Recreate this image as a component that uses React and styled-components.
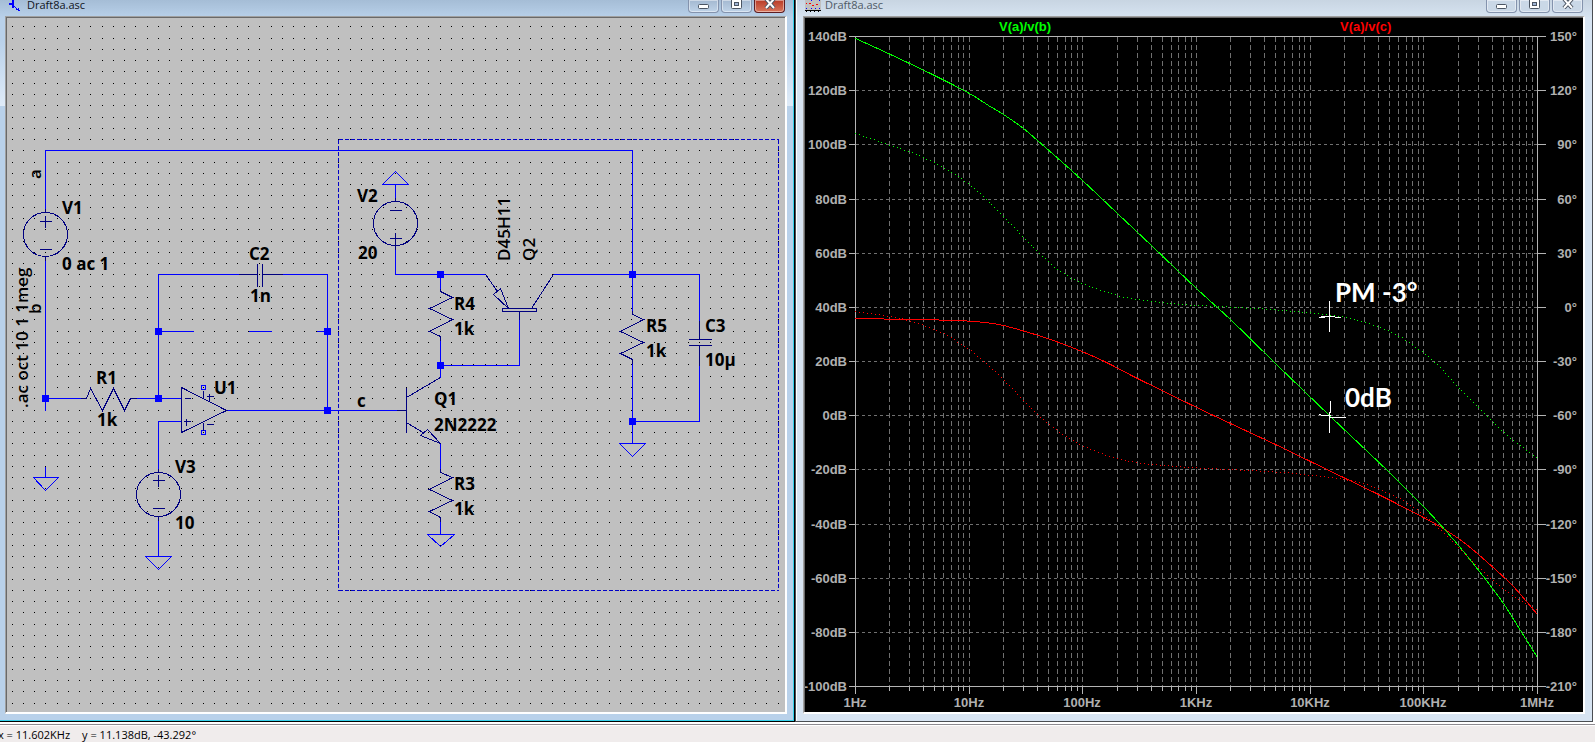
import React from 'react';
import styled, { createGlobalStyle, css } from 'styled-components';

const GlobalStyle = createGlobalStyle`
  * {
    box-sizing: border-box;
  }

  body {
    margin: 0;
    background: #fff;
    font-family: 'Open Sans', 'Noto Sans', sans-serif;
  }
`;

const Page = styled.div`
  display: flex;
  flex-direction: column;
  height: 100vh;
  min-height: 480px;
  overflow: hidden;
`;

const Workspace = styled.main`
  display: grid;
  grid-template-columns: minmax(0, 795fr) minmax(0, 798fr);
  grid-template-rows: minmax(0, 1fr);
  flex: 1;
  min-height: 0;
  padding-right: 2px;
`;

const activeFrame = css`
  padding: 0 7px 7px 5px;
  border: solid #000;
  border-width: 0 1px 1px 0;
  box-shadow: inset -1px -1px 0 #35d0ea;
  background: linear-gradient(#a5bdd6 0, #b9d1ea 18px, #b9d1ea 40px, #dfebf8 106px, #b9d1ea 106px);
`;

const inactiveFrame = css`
  padding: 0 7px 7px 7px;
  border: solid #4a4d52;
  border-width: 0 1px 1px 1px;
  box-shadow: inset 1px 0 0 #fff;
  background: linear-gradient(#c8d5e2 0, #d7e4f2 18px);
`;

const WindowFrame = styled.section`
  display: flex;
  flex-direction: column;
  min-width: 0;
  ${({ $active }) => ($active ? activeFrame : inactiveFrame)}
`;

const TitleBar = styled.header`
  display: flex;
  align-items: flex-start;
  height: 16px;
  padding-left: ${({ $active }) => ($active ? '4px' : '2px')};
  padding-right: 2px;
`;

const TitleIcon = styled.svg`
  display: block;
  width: 16px;
  height: 13px;
  flex: none;
`;

const Title = styled.h1`
  flex: 1;
  margin: 0 0 0 ${({ $active }) => ($active ? '2px' : '4px')};
  font-size: 11px;
  font-weight: 400;
  line-height: 10px;
  color: ${({ $active }) => ($active ? '#10151c' : '#4f5a66')};
`;

const TitleButtons = styled.div`
  display: flex;
  gap: 2px;
`;

const TitleButton = styled.button`
  display: flex;
  align-items: center;
  justify-content: center;
  width: 31px;
  height: 13px;
  padding: 0 0 3px;
  border: 1px solid #8493ad;
  border-top: 0;
  border-radius: 0 0 4px 4px;
  background: ${({ $active }) => ($active ? 'linear-gradient(#a3b8d0, #bfd3e8)' : '#cad8e7')};
  box-shadow: inset 0 0 0 1px rgba(255, 255, 255, 0.45);

  ${({ $danger }) =>
    $danger &&
    css`
      border-color: #5c1d22;
      background: linear-gradient(#b83a26, #d9765c);
    `}

  svg {
    display: block;
    flex: none;
  }
`;

const Client = styled.div`
  display: flex;
  flex: 1;
  min-height: 0;
  overflow: hidden;
  padding: 1px 0 0 1px;
  border: solid;
  border-width: 1px 2px 2px 1px;
  border-color: #a0a0a0 #fff #fff #a0a0a0;
  box-shadow: inset 1px 1px 0 #696969;
  background: ${({ $dark }) => ($dark ? '#000' : '#c0c0c0')};
`;

const Drawing = styled.svg`
  display: block;
  flex: 1;
  min-width: 0;
  width: 100%;
  height: 100%;
`;

const Wires = styled.g`
  fill: none;
  stroke: #0000ff;
  shape-rendering: crispEdges;
`;

const Symbols = styled.g`
  fill: none;
  stroke: #000080;
  shape-rendering: crispEdges;
`;

const PartText = styled.text`
  font: ${({ $vertical }) => ($vertical ? 600 : 700)} 17px 'Open Sans', 'Noto Sans', sans-serif;
  fill: #000;
`;

const AxisText = styled.text`
  font: bold 13px 'Liberation Sans', Arial, sans-serif;
  fill: ${({ $color }) => $color || '#b0b0b0'};
`;

const NoteText = styled.text`
  font: bold 26px Lato, sans-serif;
  fill: #fff;
`;

const StatusBar = styled.footer`
  display: flex;
  gap: 14px;
  height: 21px;
  border-top: 2px solid #fff;
  border-bottom: 1px solid #fff;
  box-shadow: inset 0 1px 0 #8d8a90, inset 0 2px 0 #fff;
  background: #f0ecec;
  font-size: 11px;
  line-height: 22px;
  white-space: pre;
  text-indent: -2px;
`;

const GRID_STEP_X = 11.267;
const GRID_STEP_Y = 11.269;

const buildDots = () => {
  let d = '';
  for (let row = 0; row < 80; row += 1) {
    for (let col = 0; col < 120; col += 1) {
      d += `M${Math.floor(12 + col * GRID_STEP_X)} ${Math.floor(26.9 + row * GRID_STEP_Y)}h1v1h-1z`;
    }
  }
  return d;
};

const dots = buildDots();

const wires = [
  'M45 208V150H632V274',
  'M45 260V410',
  'M45 398H80M136 398H181',
  'M158 398V274H238M282 274H327V410',
  'M158 331H193M248 331H271M316 331H327',
  'M226 410H396',
  'M181 421H158V468M158 520V556',
  'M395 184V197M395 249V274H485',
  'M440 274V288M440 340V377',
  'M440 365H519V319',
  'M553 274H699V320M699 365V421H632',
  'M632 274V310M632 363V443',
  'M440 443V468M440 521V534',
  'M45 466V477',
  // grounds
  'M33 477H58L45 490Z',
  'M145 556H171L158 569Z',
  'M619 443H645L632 456Z',
  'M427 534H454L440 546Z',
  'M382 184H408L395 171Z',
];

const symbols = [
  // R1
  'M80 398H86L90 388L102 410L113 388L124 410L130 398H136',
  // R4, R3, R5
  'M440 288V291L452 297L429 308L452 319L429 331L440 336V340',
  'M440 468V472L452 477L429 489L452 500L429 511L440 517V521',
  'M632 310V314L643 319L620 331L643 342L620 353L632 359V363',
  // C2, C3
  'M238 274H257M257 263V286M262 263V286M262 274H282',
  'M699 320V339M688 339H711M688 345H711M699 345V365',
  // U1
  'M181 387V432L226 410Z',
  'M184 398H190M183 421H190M186 418V425M203 390V398M203 422V430',
  'M206 396H213M209 393V400M206 424H213',
  // Q1
  'M396 410H406M406 387V432M406 397L440 377M406 422L424 433M440 443L427 429L420 435Z',
  // Q2
  'M485 274L497 291M508 308L500 288L493 294ZM531 308L553 274M502 308H536V311H502ZM519 311V319',
];

const sources = [
  { x: 45, y: 234, plus: 221, minus: 249 },
  { x: 158, y: 494, plus: 480, minus: 508 },
  { x: 395, y: 223, plus: 238, minus: 210 },
];

const nodes = [
  [45, 398],
  [158, 398],
  [158, 331],
  [327, 331],
  [327, 410],
  [440, 274],
  [440, 365],
  [632, 274],
  [632, 421],
];

const partLabels = [
  [62, 214, 'V1'],
  [62, 270, '0 ac 1'],
  [249, 260, 'C2'],
  [250, 302, '1n'],
  [96, 384, 'R1'],
  [97, 426, '1k'],
  [214, 394, 'U1'],
  [175, 473, 'V3'],
  [175, 529, '10'],
  [357, 202, 'V2'],
  [358, 259, '20'],
  [454, 310, 'R4'],
  [454, 335, '1k'],
  [357, 407, 'c'],
  [434, 405, 'Q1'],
  [434, 431, '2N2222'],
  [454, 490, 'R3'],
  [454, 515, '1k'],
  [646, 332, 'R5'],
  [646, 357, '1k'],
  [705, 332, 'C3'],
  [705, 366, '10µ'],
];

const verticalLabels = [
  [41, 179, 'a'],
  [41, 314, 'b'],
  [28, 408, '.ac oct 10 1 1meg'],
  [510, 261, 'D45H11'],
  [535, 261, 'Q2'],
];

const Schematic = () => (
  <Drawing viewBox="7 18 778 694" preserveAspectRatio="xMinYMin meet" overflow="visible">
    <path d={dots} fill="#000" shapeRendering="crispEdges" />
    <g transform="translate(0.5 0.5)">
      <path
        d="M338 139H778M338 139V590M778 139V590M338 590H778"
        fill="none"
        stroke="#0000c8"
        strokeDasharray="4 2"
        shapeRendering="crispEdges"
      />
      <Wires>
        {wires.map((d) => (
          <path key={d} d={d} />
        ))}
        <path d="M201 385h4v4h-4zM201 430h4v4h-4z" />
      </Wires>
      <Symbols>
        {symbols.map((d) => (
          <path key={d} d={d} />
        ))}
        {sources.map(({ x, y, plus, minus }) => (
          <g key={`${x}-${y}`}>
            <circle cx={x} cy={y} r="22" />
            <path d={`M${x} ${y - 26}v4M${x} ${y + 22}v4`} />
            <path d={`M${x - 6} ${plus}h12M${x} ${plus - 6}v12M${x - 6} ${minus}h12`} />
          </g>
        ))}
      </Symbols>
    </g>
    {nodes.map(([x, y]) => (
      <rect key={`${x}-${y}`} x={x - 3} y={y - 3} width="7" height="7" fill="#0000ff" />
    ))}
    {partLabels.map(([x, y, label]) => (
      <PartText key={`${x}-${y}`} x={x} y={y}>
        {label}
      </PartText>
    ))}
    {verticalLabels.map(([x, y, label]) => (
      <PartText key={label} $vertical transform={`translate(${x} ${y}) rotate(-90)`}>
        {label}
      </PartText>
    ))}
  </Drawing>
);

const PLOT = { left: 855, right: 1537, top: 36, bottom: 686 };
const DECADE = (PLOT.right - PLOT.left) / 6;
const ROW = (PLOT.bottom - PLOT.top) / 12;

const rows = Array.from({ length: 13 }, (_, i) => ({
  y: Math.round(PLOT.top + i * ROW),
  db: `${140 - i * 20}dB`,
  phase: `${150 - i * 30}°`,
}));

const freqLabels = ['1Hz', '10Hz', '100Hz', '1KHz', '10KHz', '100KHz', '1MHz'];

const columns = [];
for (let dec = 0; dec < 6; dec += 1) {
  for (let n = 1; n < 10; n += 1) {
    columns.push({
      x: Math.round(PLOT.left + (dec + Math.log10(n)) * DECADE),
      major: n === 1,
    });
  }
}
columns.push({ x: PLOT.right, major: true });

const gainTraces = [
  {
    color: '#ff0000',
    points: [
      [855, 318], [910, 319], [957, 320], [985, 322], [1003, 325], [1028, 332], [1053, 340], [1079, 350],
      [1104, 361], [1137, 378], [1190, 404], [1230, 423], [1275, 444], [1310, 461], [1345, 478],
      [1380, 495], [1423, 517], [1446, 530], [1466, 544], [1486, 561], [1510, 583], [1526, 601], [1537, 614],
    ],
  },
  {
    color: '#00ff00',
    points: [
      [855, 38], [890, 54], [934, 75], [969, 93], [988, 105], [1003, 114], [1023, 128], [1037, 140],
      [1053, 154], [1082, 180], [1117, 213], [1152, 246], [1196, 288], [1231, 320], [1275, 363],
      [1330, 416], [1390, 473], [1423, 506], [1446, 531], [1463, 551], [1486, 580], [1503, 603],
      [1520, 630], [1537, 657],
    ],
  },
];

const phaseTraces = [
  {
    color: '#ff0000',
    points: [
      [855, 311], [876, 314], [901, 318], [921, 324], [944, 333], [969, 349], [987, 364], [1003, 379],
      [1020, 397], [1037, 414], [1058, 431], [1081, 445], [1109, 456], [1139, 463], [1190, 467],
      [1230, 469], [1285, 472], [1330, 477], [1356, 481], [1378, 488], [1403, 500], [1423, 514],
      [1446, 535], [1478, 567], [1498, 585], [1518, 599], [1537, 610],
    ],
  },
  {
    color: '#00ff00',
    points: [
      [855, 133], [890, 145], [914, 153], [934, 162], [952, 172], [969, 184], [982, 195], [1003, 216],
      [1023, 237], [1037, 251], [1053, 266], [1071, 278], [1084, 284], [1104, 291], [1124, 297],
      [1150, 301], [1180, 304], [1217, 306], [1256, 308], [1297, 311], [1327, 314], [1345, 317],
      [1365, 322], [1383, 328], [1403, 338], [1423, 352], [1440, 367], [1458, 387], [1478, 407],
      [1496, 425], [1513, 440], [1537, 458],
    ],
  },
];

// Catmull-Rom spline through the sampled points
const smooth = (pts) =>
  pts.slice(1).reduce((d, p, i) => {
    const p0 = pts[i - 1] || pts[i];
    const p1 = pts[i];
    const p3 = pts[i + 2] || p;
    const c1 = [p1[0] + (p[0] - p0[0]) / 6, p1[1] + (p[1] - p0[1]) / 6];
    const c2 = [p[0] - (p3[0] - p1[0]) / 6, p[1] - (p3[1] - p1[1]) / 6];
    return `${d}C${c1} ${c2} ${p}`;
  }, `M${pts[0]}`);

// One whole-pixel dot every few pixels of trace length
const dotted = (pts, step = 4) => {
  let d = '';
  let next = 0;
  let walked = 0;
  pts.slice(1).forEach(([x2, y2], i) => {
    const [x1, y1] = pts[i];
    const length = Math.hypot(x2 - x1, y2 - y1);
    while (next <= walked + length) {
      const t = (next - walked) / length;
      d += `M${Math.round(x1 + (x2 - x1) * t)} ${Math.round(y1 + (y2 - y1) * t)}h1v1h-1z`;
      next += step;
    }
    walked += length;
  });
  return d;
};

const BodePlot = () => (
  <Drawing viewBox="805 18 778 694">
    <g transform="translate(0.5 0.5)" fill="none" shapeRendering="crispEdges">
      <g stroke="#707070">
        {columns.map(({ x }) => (
          <path key={x} d={`M${x} ${PLOT.top}V${PLOT.bottom}`} strokeDasharray="5 3" />
        ))}
        {rows.map(({ y }) => (
          <path key={y} d={`M${PLOT.left} ${y}H${PLOT.right}`} strokeDasharray="3 3" />
        ))}
      </g>
      <g stroke="#b4b4b4">
        <path d={`M${PLOT.left} ${PLOT.top}V${PLOT.bottom}M${PLOT.right} ${PLOT.top}V${PLOT.bottom}`} />
        <path d={`M848 ${PLOT.top}H1545M848 ${PLOT.bottom}H1545`} />
        {rows.map(({ y }) => (
          <path key={y} d={`M848 ${y}H855M1537 ${y}H1545`} />
        ))}
        {columns.map(({ x, major }) => (
          <path key={x} d={`M${x} ${PLOT.bottom}v${major ? 7 : 4}`} />
        ))}
      </g>
      {gainTraces.map(({ color, points }) => (
        <path key={color} d={smooth(points)} stroke={color} />
      ))}
      <path
        stroke="#fff"
        d="M1329 300V331M1318 317H1324M1320 316H1334M1334 317H1340M1330 400V412M1329 411V432M1318 414H1320M1320 415H1330M1329 417H1345"
      />
    </g>
    {phaseTraces.map(({ color, points }) => (
      <path key={color} d={dotted(points)} fill={color} shapeRendering="crispEdges" />
    ))}
    {rows.map(({ y, db, phase }) => (
      <React.Fragment key={y}>
        <AxisText x="847" y={y + 5} textAnchor="end">
          {db}
        </AxisText>
        <AxisText x="1577" y={y + 5} textAnchor="end">
          {phase}
        </AxisText>
      </React.Fragment>
    ))}
    {freqLabels.map((label, i) => (
      <AxisText key={label} x={Math.round(PLOT.left + i * DECADE)} y="707" textAnchor="middle">
        {label}
      </AxisText>
    ))}
    <AxisText $color="#00ff00" x="999" y="31">
      V(a)/v(b)
    </AxisText>
    <AxisText $color="#ff0000" x="1340" y="31">
      V(a)/v(c)
    </AxisText>
    <NoteText x="1335" y="302">
      PM -3°
    </NoteText>
    <NoteText x="1345" y="407">
      0dB
    </NoteText>
  </Drawing>
);

const SchematicIcon = () => (
  <TitleIcon viewBox="0 0 16 13" fill="none" stroke="#0000ff" shapeRendering="crispEdges">
    <path d="M0 3.5H4M4 0V8" strokeWidth="2" />
    <path d="M4 5L10 11" strokeWidth="1" />
    <path d="M6 9H9V7L11 11Z" fill="#0000ff" stroke="none" />
  </TitleIcon>
);

const PlotIcon = () => (
  <TitleIcon viewBox="0 0 16 13" shapeRendering="crispEdges">
    <path fill="#c0c0c0" d="M0 0h16v10H0z" />
    <path fill="#ff0000" d="M1 3h1v1H1zM4 3h2v1H4zM7 5h2v1H7zM11 4h2v1h-2z" />
    <path fill="#0000ff" d="M6 0h1v1H6zM14 0h1v1h-1zM1 8h1v1H1zM6 8h1v1H6zM10 8h1v1h-1zM14 8h1v1h-1z" />
    <path fill="#000" d="M0 10h16v1H0zM1 11h1v1H1zM5 11h1v1H5zM9 11h1v1H9zM13 11h1v1h-1z" />
  </TitleIcon>
);

const MinimizeGlyph = () => (
  <svg width="12" height="9">
    <rect x="0.5" y="4.5" width="10" height="4" rx="1" fill="#fff" stroke="#4b5563" />
  </svg>
);

const MaximizeGlyph = () => (
  <svg width="12" height="9">
    <rect x="0.5" y="-1.5" width="10" height="10" rx="1" fill="#fff" stroke="#4b5563" />
    <rect x="3.5" y="2.5" width="4" height="3" fill="#9fb4d4" stroke="#4b5563" />
  </svg>
);

const CloseGlyph = () => (
  <svg width="12" height="9">
    <path d="M2 -1L10 8M10 -1L2 8" stroke="#4b5563" strokeWidth="4" />
    <path d="M2 -1L10 8M10 -1L2 8" stroke="#fff" strokeWidth="2" />
  </svg>
);

const ToolWindow = ({ title, icon, active = false, dark = false, children }) => (
  <WindowFrame $active={active}>
    <TitleBar $active={active}>
      {icon}
      <Title $active={active}>{title}</Title>
      <TitleButtons>
        <TitleButton type="button" aria-label="Minimize" $active={active}>
          <MinimizeGlyph />
        </TitleButton>
        <TitleButton type="button" aria-label="Maximize" $active={active}>
          <MaximizeGlyph />
        </TitleButton>
        <TitleButton type="button" aria-label="Close" $active={active} $danger={active}>
          <CloseGlyph />
        </TitleButton>
      </TitleButtons>
    </TitleBar>
    <Client $dark={dark}>{children}</Client>
  </WindowFrame>
);

const App = () => (
  <>
    <GlobalStyle />
    <Page>
      <Workspace>
        <ToolWindow title="Draft8a.asc" icon={<SchematicIcon />} active>
          <Schematic />
        </ToolWindow>
        <ToolWindow title="Draft8a.asc" icon={<PlotIcon />} dark>
          <BodePlot />
        </ToolWindow>
      </Workspace>
      <StatusBar>
        <span>x = 11.602KHz</span>
        <span>y = 11.138dB, -43.292°</span>
      </StatusBar>
    </Page>
  </>
);

export default App;
